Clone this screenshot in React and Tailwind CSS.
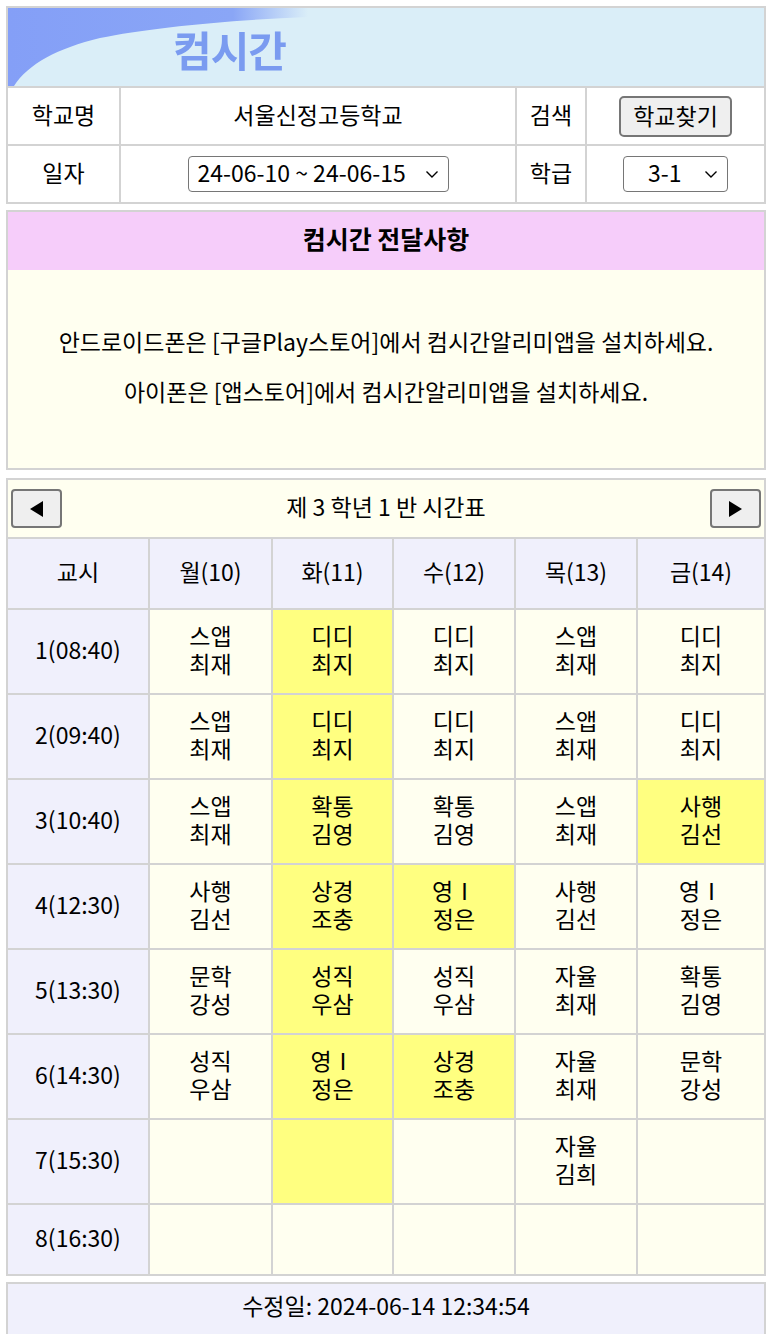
import React from 'react';

const FONT = { fontFamily: '"Noto Sans CJK KR", "Noto Sans", sans-serif' };

// 교시별 시간표: [과목, 교사, 변경여부]
const periods = [
  { label: '1(08:40)', cells: [['스앱', '최재'], ['디디', '최지', 1], ['디디', '최지'], ['스앱', '최재'], ['디디', '최지']] },
  { label: '2(09:40)', cells: [['스앱', '최재'], ['디디', '최지', 1], ['디디', '최지'], ['스앱', '최재'], ['디디', '최지']] },
  { label: '3(10:40)', cells: [['스앱', '최재'], ['확통', '김영', 1], ['확통', '김영'], ['스앱', '최재'], ['사행', '김선', 1]] },
  { label: '4(12:30)', cells: [['사행', '김선'], ['상경', '조충', 1], ['영Ⅰ', '정은', 1], ['사행', '김선'], ['영Ⅰ', '정은']] },
  { label: '5(13:30)', cells: [['문학', '강성'], ['성직', '우삼', 1], ['성직', '우삼'], ['자율', '최재'], ['확통', '김영']] },
  { label: '6(14:30)', cells: [['성직', '우삼'], ['영Ⅰ', '정은', 1], ['상경', '조충', 1], ['자율', '최재'], ['문학', '강성']] },
  { label: '7(15:30)', cells: [[], [null, null, 1], [], ['자율', '김희'], []] },
];

const days = ['월(10)', '화(11)', '수(12)', '목(13)', '금(14)'];

const Chevron = () => (
  <svg width="14" height="9" viewBox="0 0 14 9" fill="none">
    <path d="M1.5 1.5 L7 7 L12.5 1.5" stroke="#000" strokeWidth="1.4" />
  </svg>
);

const SelectBox = ({ value, className }) => (
  <div className={`flex items-center justify-between h-[36px] border border-[#767676] rounded-[4px] bg-white pr-[9px] ${className}`}>
    <span className="leading-[28px] pb-[4px]">{value}</span>
    <Chevron />
  </div>
);

const NavButton = ({ dir }) => (
  <div className="w-[51px] h-[39px] flex items-center justify-center bg-[#efefef] border-2 border-[#767676] rounded-[4px]">
    <svg width="14" height="16" viewBox="0 0 14 16">
      {dir === 'left' ? <path d="M13 0 L0 8 L13 16 Z" fill="#000" /> : <path d="M1 0 L14 8 L1 16 Z" fill="#000" />}
    </svg>
  </div>
);

const cell = 'bg-white flex items-center justify-center pb-[5px]';

const Header = () => (
  <div className="border-2 border-[#d3d3d3] bg-[#d3d3d3]">
    <div className="relative h-[78px] bg-[#daeef8] overflow-hidden">
      <svg className="absolute left-0 top-0" width="320" height="78" viewBox="0 0 320 78">
        <defs>
          <linearGradient id="lg" x1="0" y1="0" x2="1" y2="0">
            <stop offset="0" stopColor="#849ff7" />
            <stop offset="0.75" stopColor="#8aa6f6" />
            <stop offset="1" stopColor="#daeef8" />
          </linearGradient>
        </defs>
        <path d="M0 0 L300 0 L300 9 C220 12 140 20 92 30 C50 40 20 56 6 78 L0 78 Z" fill="url(#lg)" />
      </svg>
      <div className="absolute left-[165px] top-[16px] text-[42px] font-bold text-[#7a9bf0] leading-[50px] tracking-[-1px] blur-[0.5px]">컴시간</div>
    </div>
    <div className="grid grid-cols-[111px_394px_68px_1fr] gap-[2px] mt-[2px] text-[23px] leading-[28px]">
      <div className={`${cell} h-[56px]`}>학교명</div>
      <div className={cell}>서울신정고등학교</div>
      <div className={cell}>검색</div>
      <div className="bg-white flex items-center justify-center">
        <div className="w-[113px] h-[41px] flex items-center justify-center bg-[#efefef] border-2 border-[#767676] rounded-[5px] pb-[3px]">학교찾기</div>
      </div>
      <div className={`${cell} h-[56px]`}>일자</div>
      <div className="bg-white flex items-center justify-center">
        <SelectBox value="24-06-10 ~ 24-06-15" className="w-[261px] pl-[9px]" />
      </div>
      <div className={cell}>학급</div>
      <div className="bg-white flex items-center justify-center">
        <SelectBox value="3-1" className="w-[105px] pl-[24px]" />
      </div>
    </div>
  </div>
);

const Notice = () => (
  <div className="mt-[6px] border-2 border-[#d3d3d3]">
    <div className="h-[58px] bg-[#f6cdfa] flex items-center justify-center text-[25px] font-bold pb-[4px]">컴시간 전달사항</div>
    <div className="h-[198px] bg-[#fffff0] flex flex-col items-center justify-center gap-[22px] text-[23px] leading-[28px] pb-[6px]">
      <p>안드로이드폰은 [구글Play스토어]에서 컴시간알리미앱을 설치하세요.</p>
      <p>아이폰은 [앱스토어]에서 컴시간알리미앱을 설치하세요.</p>
    </div>
  </div>
);

const Timetable = () => (
  <div className="mt-[8px] border-2 border-[#d3d3d3] bg-[#d3d3d3]">
    <div className="h-[57px] bg-[#fffff0] flex items-center justify-between px-[3px] text-[23px]">
      <NavButton dir="left" />
      <span className="pb-[5px]">제 3 학년 1 반 시간표</span>
      <NavButton dir="right" />
    </div>
    <div className="grid grid-cols-[140px_121px_119px_120px_120px_1fr] gap-[2px] mt-[2px] text-[23px] leading-[28px]">
      <div className="h-[69px] bg-[#f0f0fc] flex items-center justify-center pb-[5px]">교시</div>
      {days.map((d) => (
        <div key={d} className="bg-[#f0f0fc] flex items-center justify-center pb-[5px]">{d}</div>
      ))}
      {periods.map((p) => (
        <React.Fragment key={p.label}>
          <div className="h-[83px] bg-[#f0f0fc] flex items-center justify-center pb-[6px]">{p.label}</div>
          {p.cells.map((c, i) => (
            <div
              key={i}
              className={`flex items-center justify-center text-center pb-[6px] ${c[2] ? 'bg-[#ffff80]' : 'bg-[#fffff0]'}`}
            >
              {c[0] && (
                <div>
                  {c[0]}
                  <br />
                  {c[1]}
                </div>
              )}
            </div>
          ))}
        </React.Fragment>
      ))}
      <div className="h-[69px] bg-[#f0f0fc] flex items-center justify-center pb-[5px]">8(16:30)</div>
      {days.map((d) => (
        <div key={d} className="bg-[#fffff0]" />
      ))}
    </div>
  </div>
);

export default function App() {
  return (
    <div className="w-[782px] h-[1334px] overflow-hidden bg-white text-black pl-[6px] pt-[6px]" style={FONT}>
      <div className="w-[760px]">
        <Header />
        <Notice />
        <Timetable />
        <div className="mt-[6px] h-[54px] border-2 border-[#d3d3d3] bg-[#f0f0fc] flex items-center justify-center text-[23px] pb-[7px]">
          수정일: 2024-06-14 12:34:54
        </div>
      </div>
    </div>
  );
}
